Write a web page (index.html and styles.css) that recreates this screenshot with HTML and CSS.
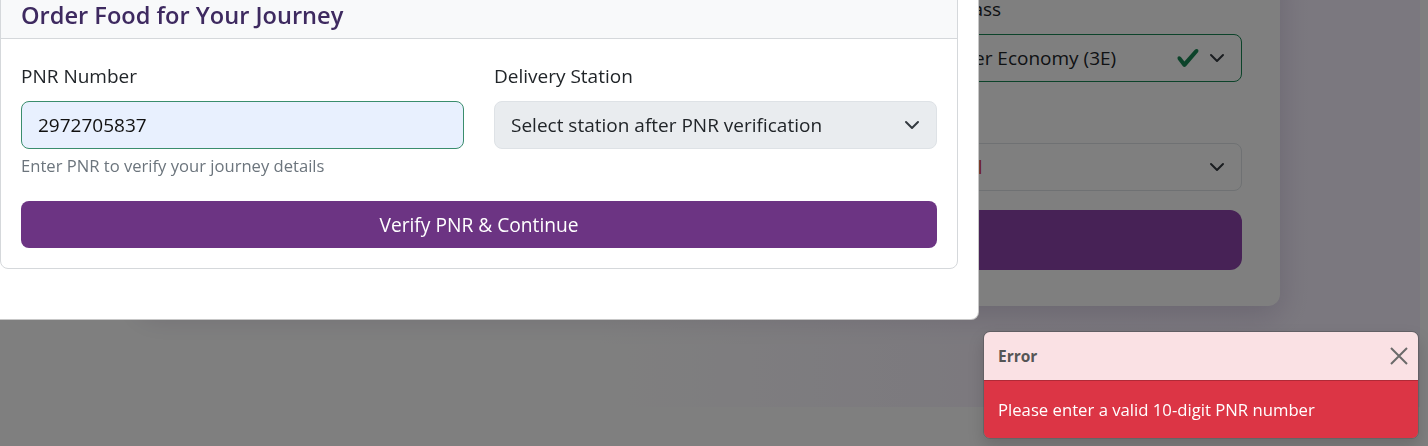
FILE: index.html
```html
<!DOCTYPE html>
<html lang="en">
<head>
<meta charset="utf-8">
<title>Order Food for Your Journey</title>
<link rel="stylesheet" href="styles.css">
</head>
<body>
<div class="page">
  <div class="bg-card">
    <div class="bg-grid bg-row1">
      <div class="bg-field">
        <label class="bg-label">Train Number</label>
        <div class="bg-control"><span>12951</span></div>
      </div>
      <div class="bg-field">
        <label class="bg-label">Journey Date</label>
        <div class="bg-control"><span>15-08-2024</span></div>
      </div>
      <div class="bg-field">
        <label class="bg-label">Travel Class</label>
        <div class="bg-control valid">
          <span class="bg-text">AC 3 Tier Economy (3E)</span>
          <svg class="check" width="24" height="24" viewBox="0 0 8 8"><path fill="#198754" d="M2.3 6.73.6 4.53c-.4-1.04.46-1.4 1.1-.8l1.1 1.4 3.4-3.8c.6-.63 1.6-.27 1.2.7l-4 4.6c-.43.5-.8.4-1.1.1z"/></svg>
          <svg class="chev" width="16" height="16" viewBox="0 0 16 16"><path fill="none" stroke="#343a40" stroke-width="2" stroke-linecap="round" stroke-linejoin="round" d="m2 5 6 6 6-6"/></svg>
        </div>
      </div>
    </div>
    <div class="bg-grid">
      <div class="bg-field">
        <label class="bg-label">From</label>
        <div class="bg-control"><span>Mumbai Central</span></div>
      </div>
      <div class="bg-field">
        <label class="bg-label">To</label>
        <div class="bg-control"><span>New Delhi</span></div>
      </div>
      <div class="bg-field">
        <label class="bg-label">Meal</label>
        <div class="bg-control meal">
          <span class="bg-text danger">Normal</span>
          <svg class="chev" width="16" height="16" viewBox="0 0 16 16"><path fill="none" stroke="#343a40" stroke-width="2" stroke-linecap="round" stroke-linejoin="round" d="m2 5 6 6 6-6"/></svg>
        </div>
      </div>
    </div>
    <div class="bg-btn">Search Trains</div>
  </div>
</div>

<div class="backdrop"></div>

<div class="modal">
  <div class="card">
    <div class="card-header">
      <h4 class="title">Order Food for Your Journey</h4>
    </div>
    <div class="card-body">
      <div class="form-row">
        <div class="field">
          <label class="label">PNR Number</label>
          <div class="input">2972705837</div>
          <div class="help">Enter PNR to verify your journey details</div>
        </div>
        <div class="field">
          <label class="label">Delivery Station</label>
          <div class="select">
            <span>Select station after PNR verification</span>
            <svg class="chev" width="16" height="16" viewBox="0 0 16 16"><path fill="none" stroke="#343a40" stroke-width="2" stroke-linecap="round" stroke-linejoin="round" d="m2 5 6 6 6-6"/></svg>
          </div>
        </div>
      </div>
      <div class="btn">Verify PNR &amp; Continue</div>
    </div>
  </div>
</div>

<div class="toast">
  <div class="toast-header">
    <strong class="toast-title">Error</strong>
    <svg class="close" width="18" height="18" viewBox="0 0 18 18"><path d="M1 1 17 17M17 1 1 17" stroke="#6a6a6a" stroke-width="2" fill="none"/></svg>
  </div>
  <div class="toast-body">Please enter a valid 10-digit PNR number</div>
</div>
</body>
</html>
```
FILE: styles.css
```css
* { box-sizing: border-box; }
html, body { margin: 0; padding: 0; background: #fff; }
body {
  font-family: "Open Sans", "Noto Sans", "Liberation Sans", sans-serif;
  color: #212529;
  width: 1428px;
  height: 446px;
  overflow: hidden;
  position: relative;
}

/* background page */
.page {
  width: 1420px;
  height: 407px;
  overflow: hidden;
  background: linear-gradient(90deg, #ffffff 0%, #ffffff 42%, #f8f3fd 68%, #f6f0ff 100%);
}
.bg-card {
  width: 1140px;
  margin: -36px auto 0;
  padding: 30px 38px 36px;
  background: #fff;
  border-radius: 12px;
  box-shadow: 0 10px 30px rgba(50, 20, 80, 0.16);
}
.bg-grid {
  display: grid;
  grid-template-columns: 1fr 1fr 345px;
  column-gap: 24px;
}
.bg-row1 { margin-bottom: 21px; }
.bg-label {
  display: block;
  height: 30px;
  font-size: 19px;
  line-height: 30px;
  margin-bottom: 10px;
}
.bg-control {
  height: 48px;
  border: 1px solid #dee2e6;
  border-radius: 8px;
  display: flex;
  align-items: center;
  padding: 0 16px;
  font-size: 19px;
  line-height: 30px;
}
.bg-control.valid { border-color: #198754; }
.bg-control.meal { padding-left: 18px; }
.bg-text { flex: 1; }
.danger { color: #dc3545; }
.check { margin-right: 9px; }
.bg-btn {
  margin-top: 19px;
  height: 60px;
  border-radius: 12px;
  background: #8e44ad;
  color: #fff;
  display: flex;
  align-items: center;
  justify-content: center;
  font-size: 20px;
}

/* overlay */
.backdrop {
  position: fixed;
  inset: 0;
  background: rgba(0, 0, 0, 0.5);
}
.modal {
  position: fixed;
  left: -21px;
  top: -31px;
  width: 1000px;
  background: #fff;
  border: 1px solid rgba(0, 0, 0, 0.22);
  border-radius: 8px;
  padding: 20px 20px 50px;
}
.card {
  border: 1px solid #d5d8db;
  border-radius: 8px;
}
.card-header {
  background: #f8f9fa;
  border-bottom: 1px solid #d5d8db;
  border-radius: 7px 7px 0 0;
  padding: 8px 20px 7px;
}
.title {
  margin: 0;
  font-size: 23.6px;
  line-height: 32px;
  font-weight: 600;
  color: #3e2a60;
}
.card-body { padding: 22px 20px 20px; }
.form-row {
  display: grid;
  grid-template-columns: 1fr 1fr;
  column-gap: 30px;
  margin-bottom: 24px;
}
.label {
  display: block;
  font-size: 19px;
  line-height: 30px;
  margin-bottom: 10px;
  color: #212529;
}
.input, .select {
  height: 48px;
  border: 1px solid #3a8d6d;
  border-radius: 8px;
  background: #e8f0fe;
  padding: 0 16px;
  display: flex;
  align-items: center;
  font-size: 19px;
  line-height: 30px;
  color: #111;
}
.select {
  background: #e9ecef;
  border-color: #dee2e6;
  color: #212529;
  justify-content: space-between;
}
.help {
  margin-top: 6px;
  font-size: 16.6px;
  line-height: 22px;
  color: #6c757d;
}
.btn {
  height: 47px;
  border-radius: 8px;
  background: #6c3483;
  color: #fff;
  display: flex;
  align-items: center;
  justify-content: center;
  font-size: 19.2px;
}

/* toast */
.toast {
  position: fixed;
  right: 9px;
  bottom: 7px;
  width: 436px;
  border: 1px solid rgba(0, 0, 0, 0.2);
  border-radius: 7px;
  overflow: hidden;
  box-shadow: 0 8px 16px rgba(0, 0, 0, 0.15);
}
.toast-header {
  height: 49px;
  background: #fae1e4;
  border-bottom: 1px solid #b02a37;
  display: flex;
  align-items: center;
  justify-content: space-between;
  padding: 0 10px 0 14px;
}
.toast-title {
  font-size: 15.5px;
  font-weight: 700;
  color: #555;
}
.toast-body {
  height: 57px;
  background: #dc3545;
  color: #fff;
  display: flex;
  align-items: center;
  padding: 0 14px;
  font-size: 16.7px;
}
```
